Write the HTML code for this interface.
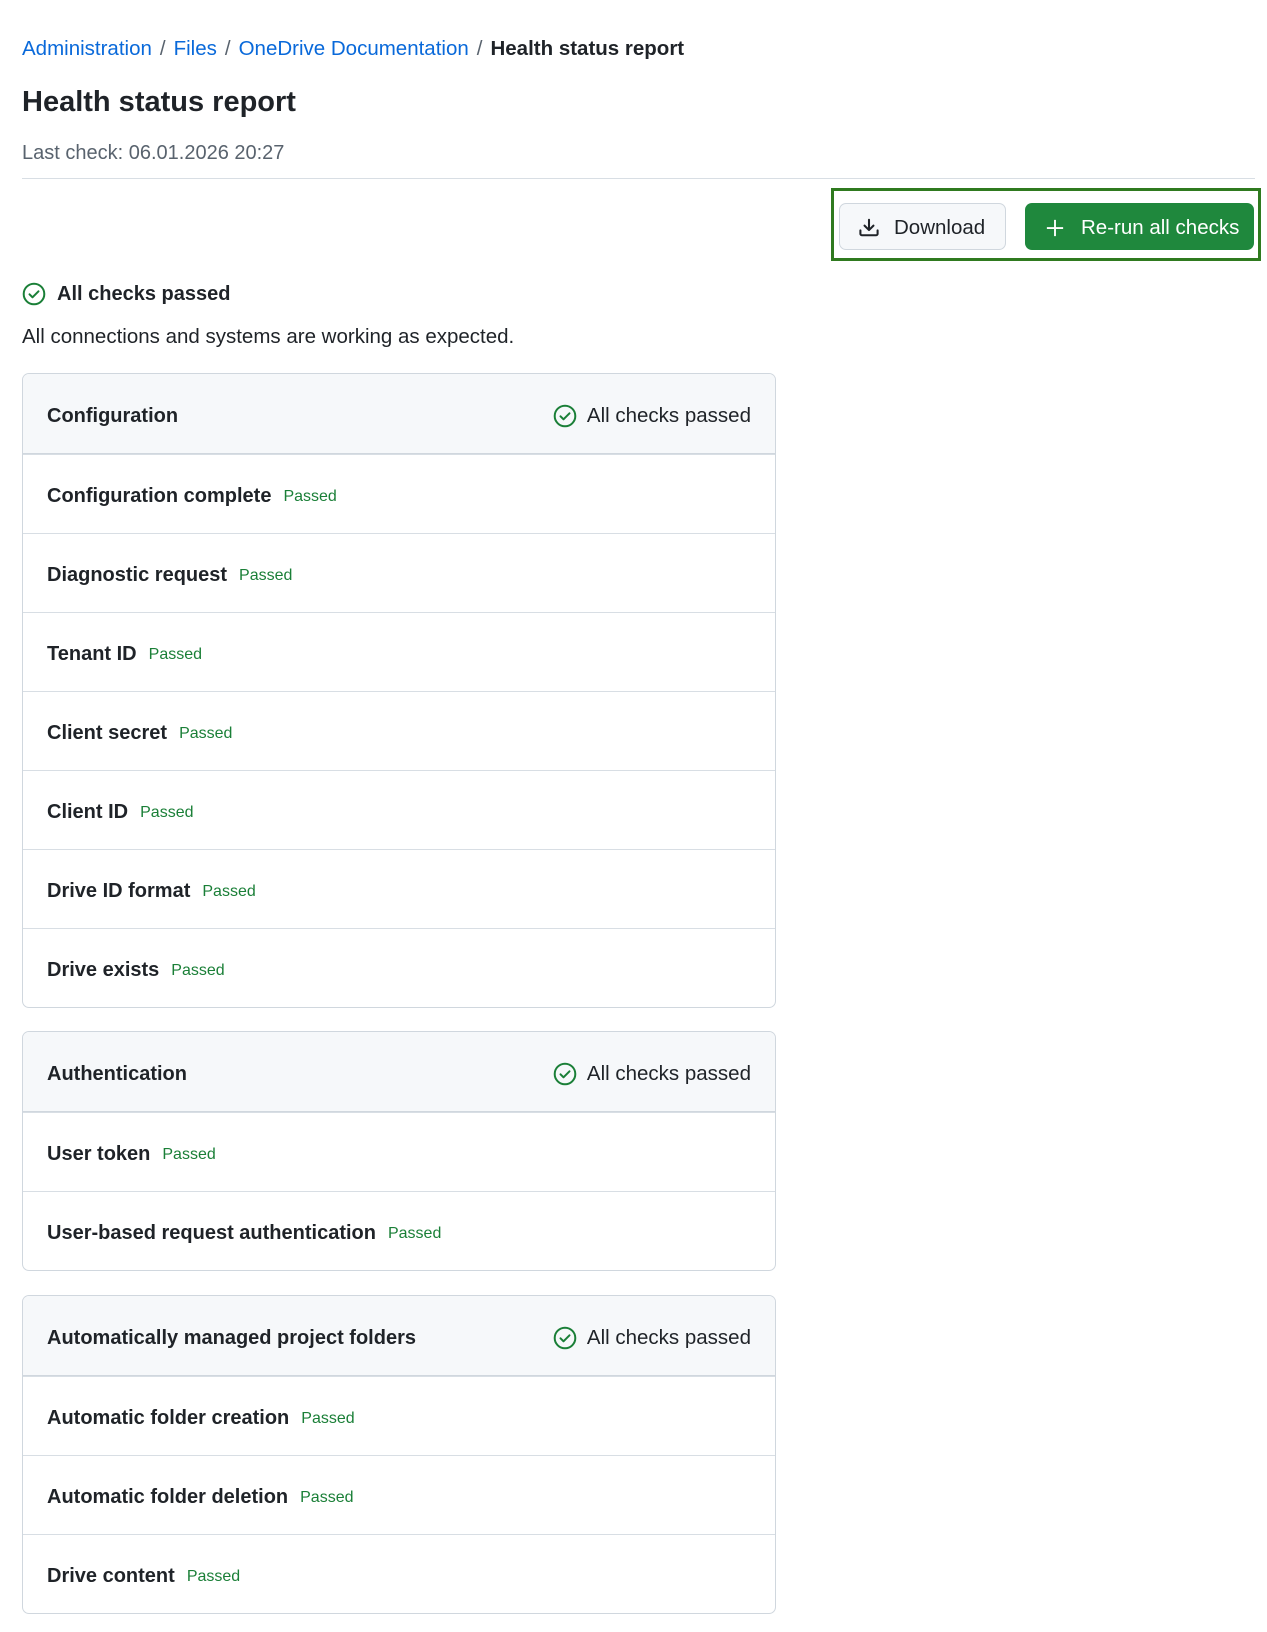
<!DOCTYPE html>
<html><head><meta charset="utf-8"><style>
*{box-sizing:border-box;margin:0;padding:0}
body{width:1267px;height:1632px;background:#fff;font-family:"Liberation Sans",sans-serif;color:#1f2328;position:relative;overflow:hidden}
.bc{position:absolute;left:22px;top:37px;font-size:20.5px;white-space:nowrap}
.bc a{color:#0969da;text-decoration:none}
.bc .s{color:#59636e;margin:0 8px}
.bc b{font-weight:bold}
h1{position:absolute;left:22px;top:86px;font-size:29px;font-weight:bold}
.last{position:absolute;left:22px;top:142px;font-size:20px;color:#59636e}
.hr{position:absolute;left:22px;top:178px;width:1233px;height:1px;background:#d8dee4}
.box{position:absolute;left:831px;top:188px;width:430px;height:73px;border:3px solid #2f7a1f}
.btn{position:absolute;top:203px;height:47px;border-radius:7px;font-size:20.5px;display:flex;align-items:center;padding-top:2px}
.dl{left:839px;width:167px;background:#f6f8fa;border:1px solid #d0d7de;color:#1f2328;padding-left:18px}
.rr{left:1025px;width:229px;background:#1f883d;color:#fff;padding-left:20px}
.ok{position:absolute;left:22px;top:282px;font-size:20px;font-weight:bold;display:flex;align-items:center;gap:11px}
.desc{position:absolute;left:22px;top:325px;font-size:20.5px}
.card{position:absolute;left:22px;width:754px;border:1px solid #d0d7de;border-radius:7px;overflow:hidden}
.hd{height:80px;background:#f6f8fa;border-bottom:1px solid #d0d7de;display:flex;align-items:center;justify-content:space-between;padding:5px 24px 0;font-size:20px;font-weight:bold}
.hd span.r{font-weight:normal;display:flex;align-items:center;gap:10px;font-size:20.5px}
.row{height:79px;border-top:1px solid #d8dee4;display:flex;align-items:center;padding:5px 24px 0;font-size:20px;font-weight:bold}
.row:first-of-type{border-top:none}
.row i{font-style:normal;font-weight:normal;color:#1a7f37;font-size:16px;margin-left:12px}
</style></head><body>
<div class="bc"><a>Administration</a><span class="s">/</span><a>Files</a><span class="s">/</span><a>OneDrive Documentation</a><span class="s">/</span><b>Health status report</b></div>
<h1>Health status report</h1>
<div class="last">Last check: 06.01.2026 20:27</div>
<div class="hr"></div>
<div class="box"></div>
<div class="btn dl"><svg width="22" height="22" viewBox="0 0 16 16" style="margin-right:14px"><path d="M2.75 14A1.75 1.75 0 0 1 1 12.25v-2.5a.75.75 0 0 1 1.5 0v2.5c0 .138.112.25.25.25h10.5a.25.25 0 0 0 .25-.25v-2.5a.75.75 0 0 1 1.5 0v2.5A1.75 1.75 0 0 1 13.250 14ZM7.25 7.689V2a.75.75 0 0 1 1.5 0v5.689l1.970-1.969a.749.749 0 1 1 1.060 1.060l-3.250 3.250a.749.749 0 0 1-1.060 0L4.220 6.780a.749.749 0 1 1 1.060-1.060l1.970 1.969Z" fill="#1f2328"/></svg>Download</div>
<div class="btn rr"><svg width="20" height="20" viewBox="0 0 16 16" style="margin-right:16px"><path d="M8 1.5v13M1.5 8h13" stroke="#fff" stroke-width="1.5"/></svg>Re-run all checks</div>
<div class="ok"><svg width="24" height="24" viewBox="0 0 24 24"><circle cx="12" cy="12" r="10.3" fill="none" stroke="#1a7f37" stroke-width="2"/><path d="M7.5 12.3l3 3 6-6" fill="none" stroke="#1a7f37" stroke-width="2" stroke-linecap="round" stroke-linejoin="round"/></svg>All checks passed</div>
<div class="desc">All connections and systems are working as expected.</div>

<div class="card" style="top:373px">
<div class="hd">Configuration<span class="r"><svg width="24" height="24" viewBox="0 0 24 24"><circle cx="12" cy="12" r="10.3" fill="none" stroke="#1a7f37" stroke-width="2"/><path d="M7.5 12.3l3 3 6-6" fill="none" stroke="#1a7f37" stroke-width="2" stroke-linecap="round" stroke-linejoin="round"/></svg>All checks passed</span></div>
<div class="row">Configuration complete<i>Passed</i></div>
<div class="row">Diagnostic request<i>Passed</i></div>
<div class="row">Tenant ID<i>Passed</i></div>
<div class="row">Client secret<i>Passed</i></div>
<div class="row">Client ID<i>Passed</i></div>
<div class="row">Drive ID format<i>Passed</i></div>
<div class="row">Drive exists<i>Passed</i></div>
</div>

<div class="card" style="top:1031px">
<div class="hd">Authentication<span class="r"><svg width="24" height="24" viewBox="0 0 24 24"><circle cx="12" cy="12" r="10.3" fill="none" stroke="#1a7f37" stroke-width="2"/><path d="M7.5 12.3l3 3 6-6" fill="none" stroke="#1a7f37" stroke-width="2" stroke-linecap="round" stroke-linejoin="round"/></svg>All checks passed</span></div>
<div class="row">User token<i>Passed</i></div>
<div class="row">User-based request authentication<i>Passed</i></div>
</div>

<div class="card" style="top:1295px">
<div class="hd">Automatically managed project folders<span class="r"><svg width="24" height="24" viewBox="0 0 24 24"><circle cx="12" cy="12" r="10.3" fill="none" stroke="#1a7f37" stroke-width="2"/><path d="M7.5 12.3l3 3 6-6" fill="none" stroke="#1a7f37" stroke-width="2" stroke-linecap="round" stroke-linejoin="round"/></svg>All checks passed</span></div>
<div class="row">Automatic folder creation<i>Passed</i></div>
<div class="row">Automatic folder deletion<i>Passed</i></div>
<div class="row">Drive content<i>Passed</i></div>
</div>
</body></html>
